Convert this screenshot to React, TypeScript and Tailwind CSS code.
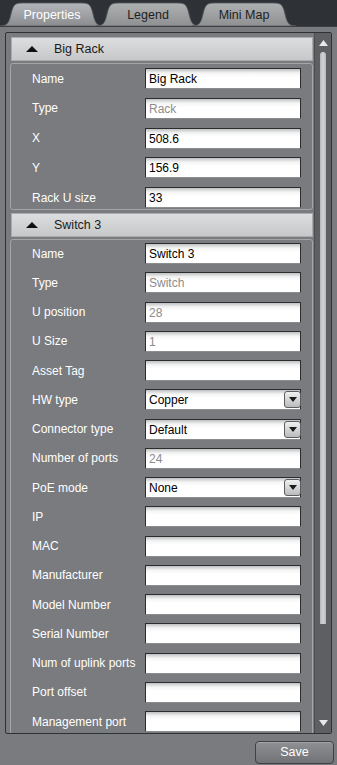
import { useState } from 'react'

type Field = {
  label: string
  value?: string
  disabled?: boolean
  select?: boolean
}

const rackFields: Field[] = [
  { label: 'Name', value: 'Big Rack' },
  { label: 'Type', value: 'Rack', disabled: true },
  { label: 'X', value: '508.6' },
  { label: 'Y', value: '156.9' },
  { label: 'Rack U size', value: '33' }
]

const switchFields: Field[] = [
  { label: 'Name', value: 'Switch 3' },
  { label: 'Type', value: 'Switch', disabled: true },
  { label: 'U position', value: '28', disabled: true },
  { label: 'U Size', value: '1', disabled: true },
  { label: 'Asset Tag' },
  { label: 'HW type', value: 'Copper', select: true },
  { label: 'Connector type', value: 'Default', select: true },
  { label: 'Number of ports', value: '24', disabled: true },
  { label: 'PoE mode', value: 'None', select: true },
  { label: 'IP' },
  { label: 'MAC' },
  { label: 'Manufacturer' },
  { label: 'Model Number' },
  { label: 'Serial Number' },
  { label: 'Num of uplink ports' },
  { label: 'Port offset' },
  { label: 'Management port' }
]

function Tab({ id, label, active }: { id: string; label: string; active?: boolean }) {
  return (
    <div className="relative w-[104px] h-[24px] -mr-[8px] flex items-center justify-center">
      <svg className="absolute inset-0" width="104" height="24" viewBox="0 0 104 24">
        <defs>
          <linearGradient id={`tabfill-${id}`} x1="0" y1="0" x2="0" y2="1">
            <stop offset="0" stopColor={active ? '#b4b6b9' : '#aeb0b2'} />
            <stop offset="1" stopColor={active ? '#8a8c8f' : '#8e9092'} />
          </linearGradient>
        </defs>
        <path
          d="M0 24 C8 24 9 20 11 12 C13 4 14 1 22 1 L82 1 C90 1 91 4 93 12 C95 20 96 24 104 24 Z"
          fill={`url(#tabfill-${id})`}
          stroke="#55585b"
          strokeWidth="0.8"
        />
      </svg>
      <span
        className={`relative pt-[2px] text-[12.5px] ${active ? 'text-white' : 'text-[#1e1f20]'}`}
      >
        {label}
      </span>
    </div>
  )
}

function Row({ field }: { field: Field }) {
  return (
    <div className="flex items-center h-[21px]">
      <span className="w-[134px] shrink-0 pl-[21px] text-[12px] text-white whitespace-nowrap">
        {field.label}
      </span>
      <div className="relative w-[156px] shrink-0 h-[21px] border border-[#2b2c2e] border-b-[#8a8c8e] rounded-[1px] bg-[linear-gradient(#bfc0c2_0px,#f4f4f4_4px,#ffffff_8px)] flex items-center">
        <span
          className={`pl-[3px] pt-[1px] text-[12px] ${field.disabled ? 'text-[#8c8c8c]' : 'text-black'}`}
        >
          {field.value ?? ''}
        </span>
        {field.select && (
          <div className="absolute right-[-1px] top-[1px] w-[17px] h-[17px] rounded-[3px] border border-[#5b5d60] bg-[linear-gradient(#f0f0f0,#b9bbbd)] flex items-center justify-center">
            <svg width="8" height="5" viewBox="0 0 8 5">
              <path d="M0 0 L8 0 L4 5 Z" fill="#1b1b1b" />
            </svg>
          </div>
        )}
      </div>
    </div>
  )
}

function Section({
  title,
  fields,
  body
}: {
  title: string
  fields: Field[]
  body: string
}) {
  return (
    <div className="flex flex-col">
      <div className="h-[24px] ml-[5px] w-[302px] flex items-center border border-[#a9abad] bg-[linear-gradient(#dcdddf,#c6c8ca)]">
        <svg width="12" height="6" viewBox="0 0 12 6" className="ml-[14px]">
          <path d="M0 6 L6 0 L12 6 Z" fill="#111" />
        </svg>
        <span className="ml-[16px] text-[12.5px] text-[#1b1b1b]">{title}</span>
      </div>
      <div
        className={`ml-[4px] w-[303px] mt-[2px] border border-[#a3a5a7] rounded-[3px] flex flex-col ${body}`}
      >
        {fields.map((f) => (
          <Row key={f.label} field={f} />
        ))}
      </div>
    </div>
  )
}

export default function App() {
  const [tab] = useState('Properties')

  return (
    <div className="w-[337px] h-[765px] bg-[#797b7e] flex flex-col font-['Liberation_Sans',Arial,sans-serif] overflow-hidden">
      <div className="h-[27px] bg-[#2e3237] flex items-end border-b border-[#3d4043]">
        <Tab id="props" label="Properties" active={tab === 'Properties'} />
        <Tab id="legend" label="Legend" active={tab === 'Legend'} />
        <Tab id="minimap" label="Mini Map" active={tab === 'Mini Map'} />
      </div>

      <div className="mx-[5px] mt-[5px] h-[702px] border border-[#2f3133] rounded-[2px] flex overflow-hidden">
        <div className="flex-1 overflow-hidden pt-[4px] flex flex-col gap-[3px]">
          <Section title="Big Rack" fields={rackFields} body="pt-[4px] pb-[1px] gap-[8.75px]" />
          <Section title="Switch 3" fields={switchFields} body="pt-[3px] pb-[4px] gap-[8.25px]" />
        </div>
        <div className="w-[17px] bg-[#5d5f62] border-l border-[#4a4c4e] flex flex-col items-center">
          <svg width="9" height="6" viewBox="0 0 9 6" className="mt-[7px]">
            <path d="M0 6 L4.5 0 L9 6 Z" fill="#e8e8e8" />
          </svg>
          <div className="mt-[6px] w-[6px] flex-1 mb-[96px] rounded-t-[3px] bg-[linear-gradient(90deg,#b5b7b9,#d3d4d6,#b5b7b9)]" />
          <svg width="9" height="6" viewBox="0 0 9 6" className="mb-[7px]">
            <path d="M0 0 L9 0 L4.5 6 Z" fill="#e8e8e8" />
          </svg>
        </div>
      </div>

      <div className="flex justify-end pr-[3px] pt-[7px]">
        <button className="w-[79px] h-[23px] rounded-[4px] border border-[#3e4042] bg-[linear-gradient(#8e9093,#707275)] text-white text-[12.5px] shadow-[inset_0_1px_0_#a2a4a6]">
          Save
        </button>
      </div>
    </div>
  )
}
